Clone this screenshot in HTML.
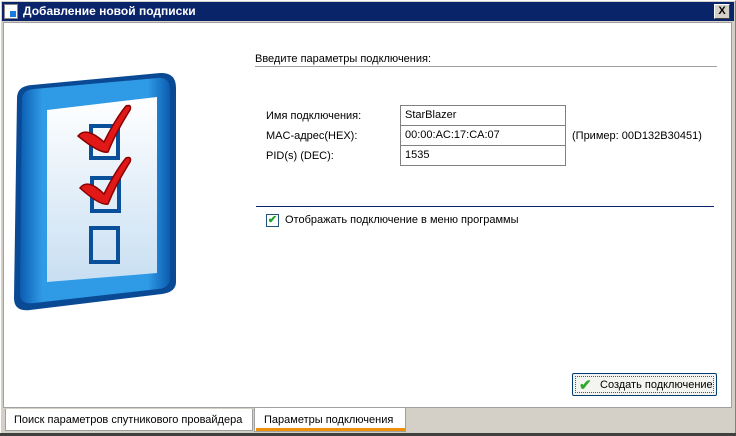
<!DOCTYPE html>
<html><head><meta charset="utf-8"><style>
*{margin:0;padding:0;box-sizing:border-box}
body{width:736px;height:436px;background:#d4d0c8;font-family:"Liberation Sans",sans-serif;font-size:11px;color:#000;position:relative;overflow:hidden}
.a{position:absolute}
.tb{left:2px;top:2px;width:732px;height:19px;background:#0a246a;color:#fff;font-weight:bold;font-size:12px}
.content{left:3px;top:22px;width:729px;height:386px;background:#fff;border:1px solid #a0a0a0}
.fld{left:400px;width:166px;height:21px;border:1px solid #808080;background:#fff;padding:3px 4px;font-size:11px}
.lbl{left:266px;font-size:11px}
</style></head><body>
<div class="a" style="left:0;top:0;width:736px;height:436px;border:1px solid #808080;border-top-color:#fff;border-left-color:#fff"></div>
<div class="a tb"><div class="a" style="left:2px;top:2px;width:14px;height:15px;background:#fff;border:1px solid #888"><div class="a" style="left:5px;top:6px;width:6px;height:6px;background:#1a7be0"></div></div><span class="a" style="left:21px;top:2px">Добавление новой подписки</span>
<div class="a" style="left:712px;top:2px;width:16px;height:15px;background:#d4d0c8;border:1px solid;border-color:#fff #404040 #404040 #fff;color:#000;font-size:11px;text-align:center;line-height:13px">X</div></div>
<div class="a content"></div>
<svg class="a" style="left:0;top:60px" width="200" height="260" viewBox="0 0 200 260">
<defs><linearGradient id="g" x1="0" y1="0" x2="1" y2="0"><stop offset="0" stop-color="#0b5cb0"/><stop offset=".15" stop-color="#2f9be6"/><stop offset=".85" stop-color="#2f9be6"/><stop offset="1" stop-color="#0b5cb0"/></linearGradient>
<linearGradient id="p" x1="0" y1="0" x2="0" y2="1"><stop offset="0" stop-color="#fff"/><stop offset="1" stop-color="#c8dff2"/></linearGradient></defs>
<path d="M17 38 Q17 26 32 25 L160 13 Q176 12 176 28 L176 222 Q176 232 162 234 L30 250 Q14 252 14 238 Z" fill="#0a4a94"/>
<path d="M22 40 Q22 30 34 29 L158 18 Q170 17 170 30 L170 218 Q170 228 158 229 L34 243 Q20 245 20 234 Z" fill="url(#g)"/>
<path d="M47 50 L157 37 L157 213 L47 222 Z" fill="url(#p)"/>
<rect x="91" y="66" width="27" height="32" fill="none" stroke="#0a4f9a" stroke-width="4"/>
<rect x="92" y="118" width="27" height="33" fill="none" stroke="#0a4f9a" stroke-width="4"/>
<rect x="91" y="168" width="27" height="34" fill="none" stroke="#0a4f9a" stroke-width="4"/>
<path d="M78 76 Q86 66 104 82 Q116 58 126 46 Q132 44 130 50 Q116 72 108 92 Q100 94 78 76Z" fill="#e01818" stroke="#8a0000" stroke-width="1.5"/>
<path d="M80 128 Q88 118 104 134 Q116 110 126 98 Q132 96 130 102 Q116 124 108 144 Q100 146 80 128Z" fill="#e01818" stroke="#8a0000" stroke-width="1.5"/>
</svg>
<div class="a" style="left:255px;top:53px">Введите параметры подключения:</div>
<div class="a" style="left:255px;top:66px;width:462px;height:1px;background:#a0a0a0"></div>
<div class="a lbl" style="top:110px">Имя подключения:</div>
<div class="a lbl" style="top:130px">MAC-адрес(HEX):</div>
<div class="a lbl" style="top:150px">PID(s) (DEC):</div>
<div class="a fld" style="top:105px">StarBlazer</div>
<div class="a fld" style="top:125px">00:00:AC:17:CA:07</div>
<div class="a fld" style="top:145px">1535</div>
<div class="a" style="left:572px;top:130px">(Пример: 00D132B30451)</div>
<div class="a" style="left:256px;top:206px;width:458px;height:1px;background:#0a246a"></div>
<div class="a" style="left:266px;top:214px;width:13px;height:13px;border:1px solid #1c5180;background:#fff;color:#21a121;font-size:11px;line-height:11px;text-align:center;font-weight:bold">✔</div>
<div class="a" style="left:285px;top:214px">Отображать подключение в меню программы</div>
<div class="a" style="left:572px;top:373px;width:145px;height:23px;border:1px solid #003c74;background:#f4f4f0;border-radius:2px"><div class="a" style="left:2px;top:2px;width:139px;height:17px;border:1px dotted #555"></div><span class="a" style="left:6px;top:2px;color:#2ca82c;font-size:15px;font-weight:bold">✔</span><span class="a" style="left:27px;top:5px">Создать подключение</span></div>
<div class="a" style="left:5px;top:409px;width:248px;height:22px;background:#fff;border:1px solid #a0a0a0;border-top:none"></div>
<div class="a" style="left:14px;top:414px">Поиск параметров спутникового провайдера</div>
<div class="a" style="left:254px;top:408px;width:152px;height:24px;background:#fff;border:1px solid #a0a0a0;border-top:none"></div>
<div class="a" style="left:256px;top:428px;width:149px;height:3px;background:#f0900a"></div>
<div class="a" style="left:264px;top:414px">Параметры подключения</div>
<div class="a" style="left:0;top:433px;width:736px;height:3px;background:#404040"></div>
</body></html>
